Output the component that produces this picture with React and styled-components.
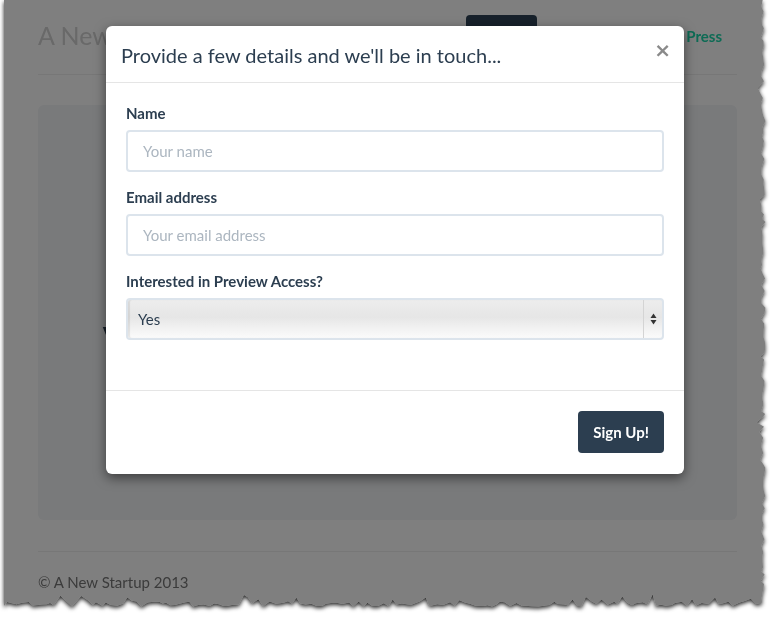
import React, { useMemo } from "react";
import styled, { createGlobalStyle } from "styled-components";

const GlobalStyle = createGlobalStyle`
  html, body { margin: 0; padding: 0; background: #ffffff; }
  body { font-family: Lato, "Open Sans", "Liberation Sans", sans-serif; color: #2c3e50; }
  * { box-sizing: border-box; }
`;

const Frame = styled.div`
  padding-left: 4px;
  width: 774px;
  height: 622px;
  overflow: hidden;
  filter: drop-shadow(0 2px 2px rgba(0, 0, 0, 0.85));
`;

const Sheet = styled.div`
  position: relative;
  width: 764px;
  height: 614px;
  background: #ffffff;
  overflow: hidden;
`;

const Container = styled.div`
  margin-left: 34px;
  width: 699px;
`;

const Header = styled.header`
  display: flex;
  justify-content: space-between;
  align-items: center;
  padding: 15px 0 19px;
  border-bottom: 1px solid #eeeeee;
`;

const Brand = styled.h3`
  margin: 0;
  font-size: 25px;
  font-weight: 400;
  line-height: 40px;
  color: #d2d2d2;
`;

const Nav = styled.nav`
  display: flex;
  gap: 1px;
`;

const Pill = styled.a`
  display: block;
  height: 40px;
  padding: 0 15px;
  border-radius: 4px;
  font-size: 15px;
  font-weight: 700;
  line-height: 42px;
  text-decoration: none;
  color: ${(p) => (p.$active ? "#ffffff" : "#1cd6aa")};
  background: ${(p) => (p.$active ? "#2e4356" : "transparent")};
`;

const Jumbotron = styled.section`
  margin-top: 30px;
  height: 415px;
  border-radius: 6px;
  background: #f2f4f7;
  display: flex;
  align-items: center;
  padding: 56px 0 0 65px;
`;

const Hero = styled.h1`
  margin: 0;
  font-size: 40px;
  font-weight: 700;
  color: #2c3e50;
  line-height: 44px;
`;

const Footer = styled.footer`
  margin-top: 31px;
  border-top: 1px solid #eeeeee;
  padding-top: 19px;
  font-size: 15px;
  line-height: 22px;
  color: #777777;
`;

const Backdrop = styled.div`
  position: absolute;
  inset: 0;
  background: rgba(0, 0, 0, 0.5);
`;

const Modal = styled.div`
  position: absolute;
  left: 102px;
  top: 26px;
  width: 578px;
  background: #ffffff;
  border-radius: 6px;
  box-shadow: 0 4px 12px rgba(0, 0, 0, 0.5);
`;

const ModalHeader = styled.div`
  display: flex;
  justify-content: space-between;
  align-items: flex-start;
  padding: 16px 15px 14px;
  border-bottom: 1px solid #e5e5e5;
`;

const Title = styled.h4`
  margin: 0;
  font-size: 20px;
  font-weight: 400;
  line-height: 26px;
  color: #2c3e50;
`;

const Close = styled.button`
  border: 0;
  background: none;
  padding: 0;
  margin: -3px -2px 0 0;
  font-family: "DejaVu Sans", "Liberation Sans", sans-serif;
  font-size: 20px;
  font-weight: 700;
  line-height: 22px;
  color: #8a8a8a;
`;

const ModalBody = styled.div`
  padding: 20px 20px 50px;
`;

const Group = styled.div`
  display: flex;
  flex-direction: column;
  & + & { margin-top: 15px; }
`;

const Label = styled.label`
  font-size: 15px;
  font-weight: 700;
  line-height: 21px;
  margin-bottom: 6px;
  color: #2c3e50;
`;

const Input = styled.input`
  height: 42px;
  width: 100%;
  padding: 0 15px;
  border: 2px solid #dce4ec;
  border-radius: 4px;
  font-family: inherit;
  font-size: 15px;
  color: #2c3e50;
  outline: none;
  &::placeholder { color: #acb6c0; }
`;

const SelectWrap = styled.div`
  position: relative;
  height: 42px;
`;

const Select = styled.select`
  appearance: none;
  width: 100%;
  height: 42px;
  padding: 0 10px;
  border: 2px solid #dce4ec;
  border-radius: 4px;
  font-family: inherit;
  font-size: 15px;
  color: #2c3e50;
  background: linear-gradient(#ededed 0%, #e6e6e6 45%, #f2f2f2 75%, #fbfbfb 100%);
  box-shadow: inset 2px 0 1px rgba(0, 0, 0, 0.08);
  outline: none;
`;

const Arrows = styled.div`
  position: absolute;
  top: 2px;
  bottom: 2px;
  right: 2px;
  width: 19px;
  border-left: 1px solid #d4d4d4;
  display: flex;
  align-items: center;
  justify-content: center;
  pointer-events: none;
`;

const ModalFooter = styled.div`
  display: flex;
  justify-content: flex-end;
  padding: 20px 20px 21px;
  border-top: 1px solid #e5e5e5;
`;

const Button = styled.button`
  height: 42px;
  padding: 0 15px;
  border: 0;
  border-radius: 4px;
  background: #2c3e50;
  color: #ffffff;
  font-family: inherit;
  font-size: 15px;
  font-weight: 700;
`;

function mulberry32(a) {
  return function () {
    a |= 0;
    a = (a + 0x6d2b79f5) | 0;
    let t = Math.imul(a ^ (a >>> 15), 1 | a);
    t = (t + Math.imul(t ^ (t >>> 7), 61 | t)) ^ t;
    return ((t ^ (t >>> 14)) >>> 0) / 4294967296;
  };
}

function tornPolygon() {
  const r = mulberry32(42);
  const pts = [[0, 0]];
  for (let y = 0; y < 600; y += 3 + r() * 4) {
    const spike = r() < 0.12 ? -r() * 5 : 0;
    pts.push([759 + (r() - 0.5) * 5 + spike, y]);
  }
  for (let x = 758; x > 0; x -= 3 + r() * 4) {
    const spike = r() < 0.18 ? -r() * 8 : 0;
    pts.push([x, 604 + (r() - 0.5) * 5 + spike]);
  }
  pts.push([0, 606]);
  return `polygon(${pts.map(([x, y]) => `${x.toFixed(1)}px ${y.toFixed(1)}px`).join(", ")})`;
}

export default function App() {
  const clip = useMemo(tornPolygon, []);
  return (
    <>
      <GlobalStyle />
      <Frame>
        <Sheet style={{ clipPath: clip }}>
          <Container>
            <Header>
              <Brand>A New Startup</Brand>
              <Nav>
                <Pill $active href="#">Home</Pill>
                <Pill href="#">About</Pill>
                <Pill href="#">Blog</Pill>
                <Pill href="#">Press</Pill>
              </Nav>
            </Header>
            <Jumbotron>
              <Hero>Very soon.</Hero>
            </Jumbotron>
            <Footer>© A New Startup 2013</Footer>
          </Container>
          <Backdrop />
          <Modal>
            <ModalHeader>
              <Title>Provide a few details and we'll be in touch...</Title>
              <Close aria-label="Close">×</Close>
            </ModalHeader>
            <ModalBody>
              <Group>
                <Label>Name</Label>
                <Input placeholder="Your name" />
              </Group>
              <Group>
                <Label>Email address</Label>
                <Input placeholder="Your email address" />
              </Group>
              <Group>
                <Label>Interested in Preview Access?</Label>
                <SelectWrap>
                  <Select defaultValue="Yes">
                    <option>Yes</option>
                    <option>No</option>
                  </Select>
                  <Arrows>
                    <svg width="7" height="12" viewBox="0 0 7 12">
                      <path d="M3.5 0.5 L6.5 5 L0.5 5 Z" fill="#333" />
                      <path d="M0.5 7 L6.5 7 L3.5 11.5 Z" fill="#333" />
                    </svg>
                  </Arrows>
                </SelectWrap>
              </Group>
            </ModalBody>
            <ModalFooter>
              <Button>Sign Up!</Button>
            </ModalFooter>
          </Modal>
        </Sheet>
      </Frame>
    </>
  );
}
